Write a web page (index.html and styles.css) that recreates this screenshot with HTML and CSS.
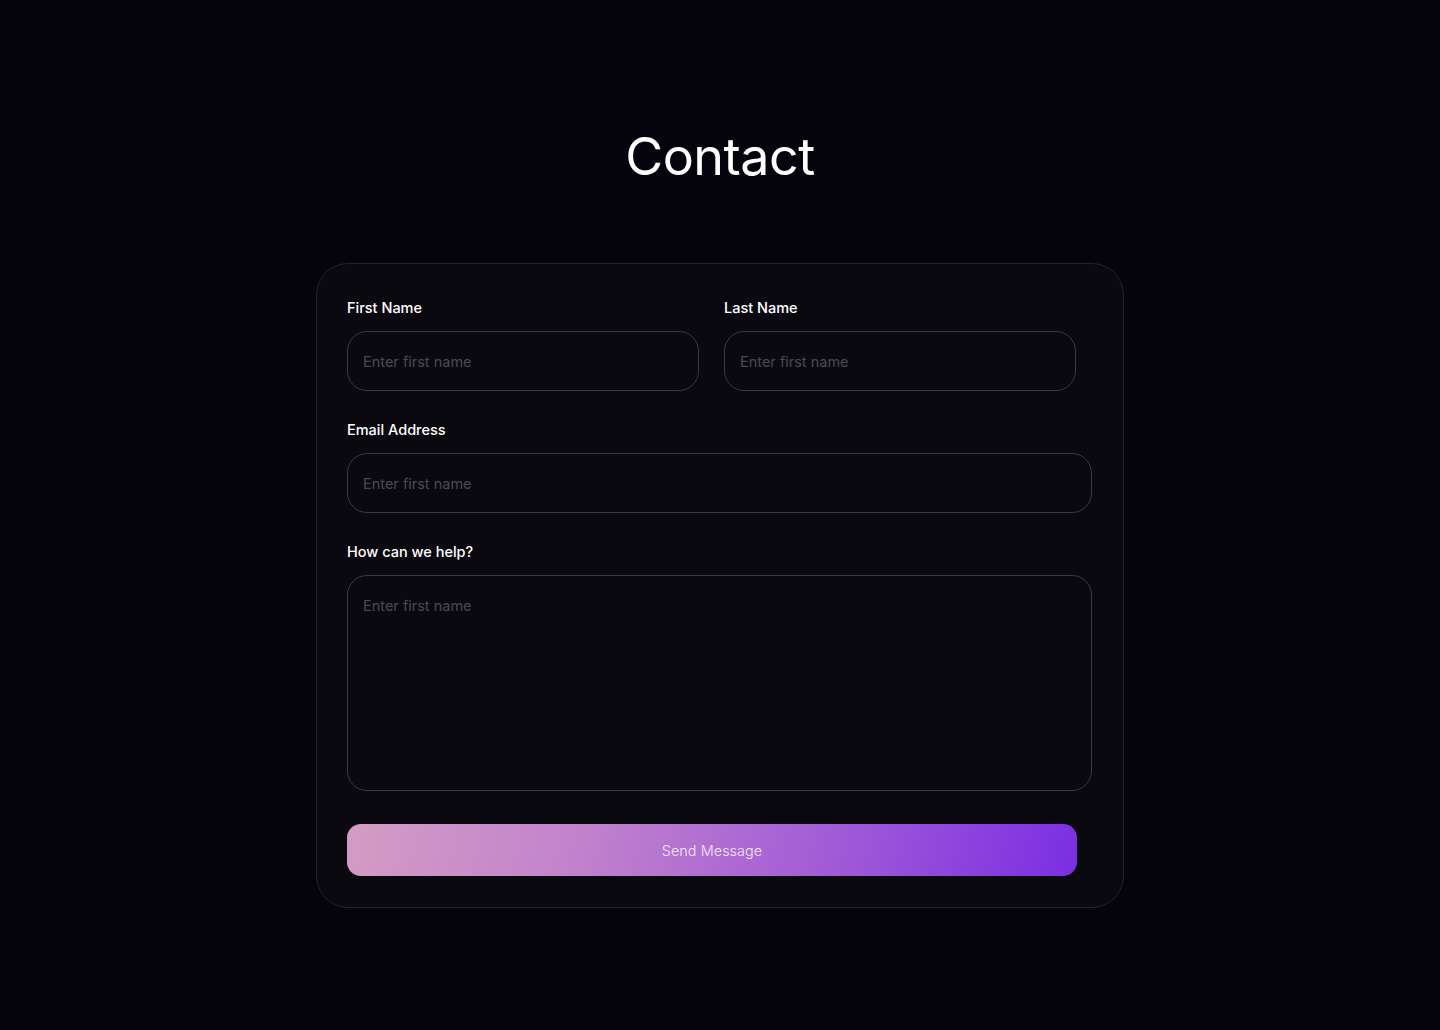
FILE: index.html
```html
<!DOCTYPE html>
<html lang="en">
<head>
<meta charset="utf-8">
<title>Contact</title>
<link rel="stylesheet" href="styles.css">
</head>
<body>
<main class="page">
  <h1 class="title">Contact</h1>
  <form class="card">
    <div class="row">
      <div class="field">
        <label class="label">First Name</label>
        <input class="input" type="text" placeholder="Enter first name">
      </div>
      <div class="field">
        <label class="label">Last Name</label>
        <input class="input" type="text" placeholder="Enter first name">
      </div>
    </div>
    <div class="field">
      <label class="label">Email Address</label>
      <input class="input" type="email" placeholder="Enter first name">
    </div>
    <div class="field">
      <label class="label">How can we help?</label>
      <textarea class="input textarea" placeholder="Enter first name"></textarea>
    </div>
    <button class="send" type="button">Send Message</button>
  </form>
</main>
</body>
</html>
```
FILE: styles.css
```css
* { box-sizing: border-box; }
html, body { margin: 0; padding: 0; }
body {
  background: #05030b;
  font-family: "Inter", "Noto Sans", sans-serif;
  color: #ffffff;
  min-height: 1030px;
}
.page {
  display: flex;
  flex-direction: column;
  align-items: center;
  padding-top: 123px;
}
.title {
  margin: 0 0 72px;
  font-size: 52px;
  font-weight: 400;
  line-height: 68px;
  letter-spacing: -0.5px;
  color: #ffffff;
}
.card {
  width: 808px;
  background: #0a0910;
  border: 1px solid #24222a;
  border-radius: 32px;
  padding: 34px 31px 31px 30px;
  display: flex;
  flex-direction: column;
  gap: 29px;
}
.row {
  width: 729px;
  display: grid;
  grid-template-columns: 1fr 1fr;
  gap: 25px;
}
.field {
  display: flex;
  flex-direction: column;
  gap: 13px;
}
.label {
  font-size: 14.5px;
  font-weight: 500;
  line-height: 20px;
  color: #ffffff;
}
.input {
  height: 60px;
  width: 100%;
  background: transparent;
  border: 1px solid #3a3941;
  border-radius: 20px;
  padding: 0 15px;
  font-family: inherit;
  font-size: 14.5px;
  color: #ffffff;
  outline: none;
}
.input::placeholder { color: #4a494f; }
.textarea {
  height: 216px;
  padding: 20px 15px;
  resize: none;
  line-height: 20px;
  display: block;
}
.send {
  margin-top: 4px;
  width: 730px;
  height: 52px;
  border: none;
  border-radius: 14px;
  background: linear-gradient(105deg, #d49cc4 0%, #c384cc 30%, #a25dd6 65%, #7a2ee3 100%);
  color: #f4e6f4;
  font-family: inherit;
  font-size: 14.5px;
  font-weight: 300;
  cursor: pointer;
}
```
